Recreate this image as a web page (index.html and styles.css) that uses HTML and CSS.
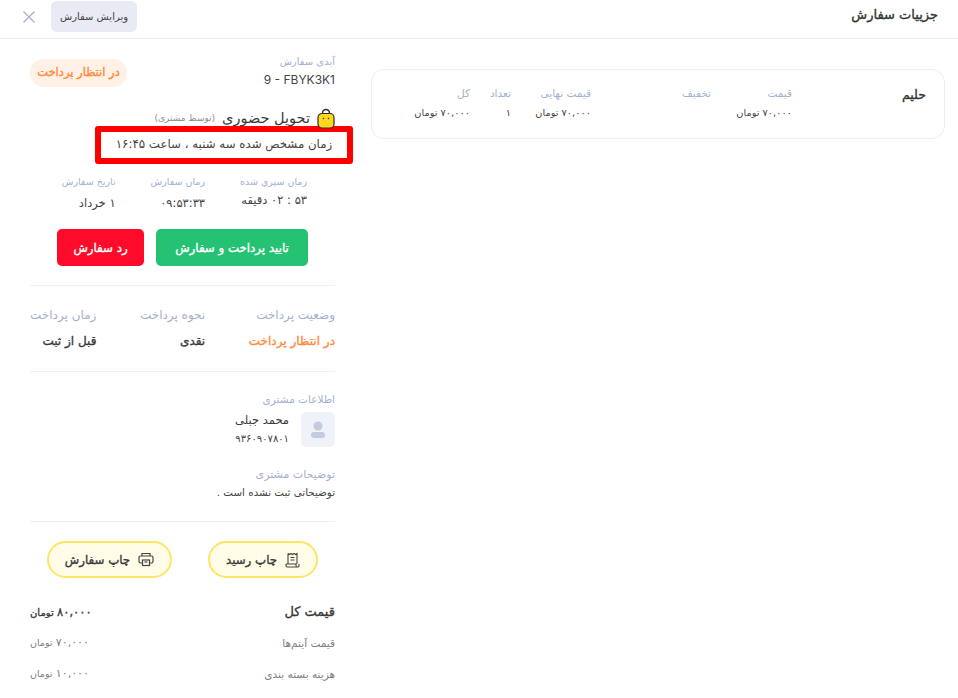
FILE: index.html
```html
<!DOCTYPE html>
<html lang="fa" dir="rtl">
<head>
    <meta charset="UTF-8">
    <meta name="viewport" content="width=device-width, initial-scale=1.0">
    <title>جزییات سفارش</title>
    <link rel="stylesheet" href="styles.css">
</head>
<body>
    <header class="topbar">
        <h1 class="page-title">جزییات سفارش</h1>
        <div class="topbar-actions">
            <button class="edit-btn">ویرایش سفارش</button>
            <svg class="close-icon" width="14" height="14" viewBox="0 0 14 14" fill="none" stroke="#a9b2cf" stroke-width="1.4"><path d="M1.5 1.5l11 11M12.5 1.5l-11 11"/></svg>
        </div>
    </header>

    <div class="layout">
        <main class="items">
            <div class="item-card">
                <div class="item-name">حلیم</div>
                <div class="item-col col-price">
                    <span class="item-label">قیمت</span>
                    <span class="item-value">۷۰,۰۰۰ تومان</span>
                </div>
                <div class="item-col col-discount">
                    <span class="item-label">تخفیف</span>
                </div>
                <div class="item-col col-final">
                    <span class="item-label">قیمت نهایی</span>
                    <span class="item-value">۷۰,۰۰۰ تومان</span>
                </div>
                <div class="item-col col-count">
                    <span class="item-label">تعداد</span>
                    <span class="item-value">۱</span>
                </div>
                <div class="item-col col-total">
                    <span class="item-label">کل</span>
                    <span class="item-value">۷۰,۰۰۰ تومان</span>
                </div>
            </div>
        </main>

        <aside class="sidebar">
            <div class="order-head">
                <div>
                    <div class="order-id-label">آیدی سفارش</div>
                    <div class="order-id" dir="ltr">9 - FBYK3K1</div>
                </div>
                <span class="status-badge">در انتظار پرداخت</span>
            </div>

            <div class="delivery">
                <svg width="18" height="21" viewBox="0 0 18 21">
                    <path d="M5.5 7V5a3.5 3.5 0 0 1 7 0v2" fill="none" stroke="#2e2e2e" stroke-width="1.4"/>
                    <rect x="1" y="5.5" width="16" height="14.5" rx="4" fill="#ffd91f" stroke="#2e2e2e" stroke-width="1.2"/>
                    <circle cx="6.5" cy="10.5" r=".8" fill="#2e2e2e"/>
                    <circle cx="11.5" cy="10.5" r=".8" fill="#2e2e2e"/>
                </svg>
                <span class="delivery-title">تحویل حضوری</span>
                <span class="delivery-note">(توسط مشتری)</span>
            </div>

            <div class="schedule">زمان مشخص شده سه شنبه ، ساعت ۱۶:۴۵</div>

            <div class="times">
                <div class="time-col">
                    <div class="time-label">زمان سپری شده</div>
                    <div class="time-value time-elapsed">۵۳ : ۰۲ دقیقه</div>
                </div>
                <div class="time-col">
                    <div class="time-label">زمان سفارش</div>
                    <div class="time-value">۰۹:۵۳:۳۳</div>
                </div>
                <div class="time-col">
                    <div class="time-label">تاریخ سفارش</div>
                    <div class="time-value">۱ خرداد</div>
                </div>
            </div>

            <div class="actions">
                <button class="btn btn-green">تایید پرداخت و سفارش</button>
                <button class="btn btn-red">رد سفارش</button>
            </div>

            <div class="payment section">
                <div>
                    <div class="muted-label">وضعیت پرداخت</div>
                    <div class="pay-value pay-pending">در انتظار پرداخت</div>
                </div>
                <div>
                    <div class="muted-label">نحوه پرداخت</div>
                    <div class="pay-value">نقدی</div>
                </div>
                <div>
                    <div class="muted-label">زمان پرداخت</div>
                    <div class="pay-value">قبل از ثبت</div>
                </div>
            </div>

            <div class="customer section">
                <div class="muted-label customer-label">اطلاعات مشتری</div>
                <div class="customer-row">
                    <div class="avatar">
                        <svg width="14" height="18" viewBox="0 0 14 18" fill="#c3cbe3"><circle cx="7" cy="5" r="4.5"/><rect y="11" width="14" height="6" rx="3"/></svg>
                    </div>
                    <div class="customer-info">
                        <div class="customer-name">محمد جبلی</div>
                        <div class="customer-phone">۹۳۶۰۹۰۷۸۰۱</div>
                    </div>
                </div>
                <div class="muted-label note-label">توضیحات مشتری</div>
                <div class="note-text">توضیحاتی ثبت نشده است .</div>
            </div>

            <div class="prints section">
                <button class="print-btn print-receipt">
                    <svg width="15" height="16" viewBox="0 0 15 16" fill="none" stroke="#444" stroke-width="1.1"><path d="M3 1.5l1.5 1 1.5-1 1.5 1 1.5-1 1.5 1 1.5-1V12M3 1.5V12M1 12h10v1.5a1.5 1.5 0 0 0 3 0V12M1 12v1.5A1.5 1.5 0 0 0 2.5 15h10M5.5 5.5h4M5.5 8h4"/></svg>
                    چاپ رسید
                </button>
                <button class="print-btn print-order">
                    <svg width="16" height="15" viewBox="0 0 16 15" fill="none" stroke="#444" stroke-width="1.2"><path d="M4 4V1.5h8V4M4 11H2.5A1.5 1.5 0 0 1 1 9.5V5.5A1.5 1.5 0 0 1 2.5 4h11A1.5 1.5 0 0 1 15 5.5v4a1.5 1.5 0 0 1-1.5 1.5H12"/><rect x="4.5" y="8" width="7" height="5.5"/><path d="M6.5 10h3"/></svg>
                    چاپ سفارش
                </button>
            </div>

            <div class="totals">
                <div class="total-row total-main">
                    <span class="total-title">قیمت کل</span>
                    <span><b>۸۰,۰۰۰</b> <small>تومان</small></span>
                </div>
                <div class="total-row">
                    <span>قیمت آیتم‌ها</span>
                    <span><b>۷۰,۰۰۰</b> <small>تومان</small></span>
                </div>
                <div class="total-row">
                    <span>هزینه بسته بندی</span>
                    <span><b>۱۰,۰۰۰</b> <small>تومان</small></span>
                </div>
            </div>
        </aside>
    </div>
</body>
</html>
```

FILE: styles.css
```css
html, body {
    height: 698px;
    overflow: hidden;
}
body {
    margin: 0;
    background: #fff;
    color: #333;
    font-family: "DejaVu Sans", "Noto Sans", sans-serif;
    font-size: 11px;
}
button {
    font-family: inherit;
    border: none;
    cursor: pointer;
}
/* DejaVu bold runs too wide, so heavy text is regular weight with a thin stroke */
.page-title, .item-name, .status-badge, .btn, .pay-value, .print-btn, .total-main {
    font-weight: normal;
    -webkit-text-stroke: 0.35px currentColor;
}
.topbar {
    height: 38px;
    display: flex;
    justify-content: space-between;
    align-items: flex-start;
    padding: 0 20px 0 22px;
    border-bottom: 1px solid #ececf0;
}
.page-title {
    margin: 7px 0 0;
    font-size: 13px;
    color: #333;
}
.topbar-actions {
    display: flex;
    align-items: center;
    gap: 15px;
}
.edit-btn {
    width: 86px;
    height: 31px;
    margin-top: 1px;
    padding: 0;
    background: #e8eaf5;
    color: #444;
    font-size: 10px;
    border-radius: 6px;
}
.close-icon {
    margin-top: 1px;
}

.layout {
    display: flex;
}
.items {
    flex: 1;
    padding: 30px 13px 0 6px;
}
.item-card {
    height: 70px;
    box-sizing: border-box;
    display: flex;
    padding: 17px 18px 0 0;
    border: 1px solid #eeeef2;
    border-radius: 13px;
}
.item-name {
    width: 134px;
    font-size: 12.5px;
    line-height: 14px;
    color: #333;
    padding-top: 1px;
}
.item-col {
    display: flex;
    flex-direction: column;
    gap: 8px;
}
.item-label {
    font-size: 10.5px;
    line-height: 12px;
    color: #a6afd0;
}
.item-value {
    font-size: 9.8px;
    line-height: 12px;
    color: #444;
    white-space: nowrap;
}
.col-price { width: 81px; }
.col-discount { width: 120px; }
.col-final { width: 80px; }
.col-count { width: 41px; }

.sidebar {
    width: 305px;
    flex: none;
    padding: 17px 30px 0 0;
    margin-left: 30px;
}
.order-head {
    display: flex;
    justify-content: space-between;
    align-items: flex-start;
    height: 54px;
}
.order-id-label {
    font-size: 10px;
    color: #a6afd0;
}
.order-id {
    font-family: "Inter", "Liberation Sans", sans-serif;
    font-size: 12px;
    color: #444;
    margin-top: 5px;
    text-align: right;
}
.status-badge {
    width: 97px;
    height: 28px;
    line-height: 27px;
    margin-top: 3px;
    text-align: center;
    background: #fff1e6;
    color: #ff8a3c;
    font-size: 11.5px;
    border-radius: 14px;
}
.delivery {
    display: flex;
    align-items: center;
    gap: 7px;
    height: 16px;
}
.delivery-title {
    font-size: 14.5px;
    color: #3a3a3a;
}
.delivery-note {
    font-size: 9px;
    color: #8b8b93;
}
.schedule {
    width: 246px;
    height: 26px;
    line-height: 25px;
    margin: 0 -18px 0 0;
    text-align: center;
    border: 6px solid #ff0000;
    border-radius: 3px;
    font-size: 11.8px;
    color: #444;
    background: #fff;
}
.times {
    display: flex;
    margin: 11px 28px 0 0;
}
.time-col {
    flex: none;
    margin-left: 35px;
}
.time-label {
    font-size: 9.5px;
    line-height: 13px;
    color: #a6afd0;
}
.time-value {
    margin-top: 7px;
    font-size: 11.5px;
    line-height: 16px;
    color: #444;
}
.time-elapsed {
    margin-top: 4px;
}
.actions {
    display: flex;
    gap: 12px;
    margin: 18px 27px 0 0;
}
.btn {
    height: 37px;
    padding: 0;
    color: #fff;
    font-size: 11.8px;
    border-radius: 5px;
}
.btn-green {
    width: 152px;
    background: #25c274;
}
.btn-red {
    width: 87px;
    background: #ff0a2b;
}
.section {
    border-top: 1px solid #f0f0f4;
}
.payment {
    display: flex;
    justify-content: space-between;
    margin-top: 19px;
    padding-top: 21px;
    height: 64px;
}
.muted-label {
    font-size: 12px;
    line-height: 16px;
    color: #a6afd0;
}
.pay-value {
    margin-top: 10px;
    font-size: 12px;
    line-height: 16px;
    color: #3a3a3a;
}
.pay-pending {
    color: #ff8a3c;
}
.customer {
    height: 130px;
    padding-top: 19px;
}
.customer-label {
    font-size: 10.5px;
}
.customer-row {
    display: flex;
    gap: 12px;
    margin-top: 5px;
}
.avatar {
    width: 34px;
    height: 35px;
    display: flex;
    align-items: center;
    justify-content: center;
    background: #f0f2f9;
    border-radius: 5px;
}
.customer-info {
    padding-top: 1px;
}
.customer-name {
    font-size: 11.5px;
    color: #3a3a3a;
}
.customer-phone {
    margin-top: 6px;
    font-size: 10px;
    color: #444;
}
.note-label {
    margin-top: 20px;
    font-size: 11px;
}
.note-text {
    margin-top: 3px;
    font-size: 10.3px;
    color: #444;
}
.prints {
    display: flex;
    padding: 19px 17px 0 0;
    gap: 36px;
}
.print-btn {
    height: 37px;
    display: flex;
    align-items: center;
    justify-content: center;
    gap: 8px;
    padding: 0;
    background: #fffde8;
    border: 2px solid #ffe566;
    border-radius: 19px;
    color: #3a3a3a;
    font-size: 11.8px;
}
.print-btn svg {
    -webkit-text-stroke: 0;
}
.print-receipt {
    width: 110px;
}
.print-order {
    width: 125px;
}
.totals {
    margin-top: 18px;
}
.total-row {
    display: flex;
    justify-content: space-between;
    align-items: center;
    height: 31px;
    font-size: 10.5px;
    color: #7d7d85;
}
.total-row b {
    font-size: 11px;
    font-weight: normal;
}
.total-row small {
    font-size: 9.5px;
}
.total-main {
    color: #3a3a3a;
}
.total-main b {
    font-size: 11.5px;
}
.total-main small {
    font-size: 10px;
}
.total-title {
    font-size: 13px;
}
```
